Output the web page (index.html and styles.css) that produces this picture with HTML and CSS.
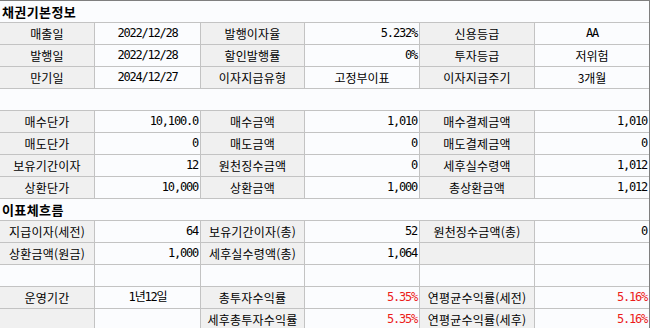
FILE: index.html
```html
<!DOCTYPE html>
<html lang="ko">
<head>
<meta charset="utf-8">
<title>채권기본정보</title>
<link rel="stylesheet" href="styles.css">
</head>
<body>
<div class="panel">
  <div class="title">채권기본정보</div>
  <div class="tbl">
    <div class="l">매출일</div><div class="c num">2022/12/28</div>
    <div class="l">발행이자율</div><div class="v num">5.232%</div>
    <div class="l">신용등급</div><div class="c num">AA</div>

    <div class="l">발행일</div><div class="c num">2022/12/28</div>
    <div class="l">할인발행률</div><div class="v num">0%</div>
    <div class="l">투자등급</div><div class="c">저위험</div>

    <div class="l">만기일</div><div class="c num">2024/12/27</div>
    <div class="l">이자지급유형</div><div class="c">고정부이표</div>
    <div class="l">이자지급주기</div><div class="c">3개월</div>
  </div>
  <div class="spacer"></div>
  <div class="tbl">
    <div class="l">매수단가</div><div class="v num">10,100.0</div>
    <div class="l">매수금액</div><div class="v num">1,010</div>
    <div class="l">매수결제금액</div><div class="v num">1,010</div>

    <div class="l">매도단가</div><div class="v num">0</div>
    <div class="l">매도금액</div><div class="v num">0</div>
    <div class="l">매도결제금액</div><div class="v num">0</div>

    <div class="l">보유기간이자</div><div class="v num">12</div>
    <div class="l">원천징수금액</div><div class="v num">0</div>
    <div class="l">세후실수령액</div><div class="v num">1,012</div>

    <div class="l">상환단가</div><div class="v num">10,000</div>
    <div class="l">상환금액</div><div class="v num">1,000</div>
    <div class="l">총상환금액</div><div class="v num">1,012</div>
  </div>
  <div class="title">이표체흐름</div>
  <div class="tbl">
    <div class="l">지급이자(세전)</div><div class="v num">64</div>
    <div class="l">보유기간이자(총)</div><div class="v num">52</div>
    <div class="l">원천징수금액(총)</div><div class="v num">0</div>

    <div class="l">상환금액(원금)</div><div class="v num">1,000</div>
    <div class="l">세후실수령액(총)</div><div class="v num">1,064</div>
    <div class="l"></div><div class="v"></div>

    <div class="v"></div><div class="v"></div>
    <div class="v"></div><div class="v"></div>
    <div class="v"></div><div class="v"></div>

    <div class="l">운영기간</div><div class="c num">1년12일</div>
    <div class="l">총투자수익률</div><div class="v num red">5.35%</div>
    <div class="l">연평균수익률(세전)</div><div class="v num red">5.16%</div>

    <div class="l"></div><div class="v"></div>
    <div class="l">세후총투자수익률</div><div class="v num red">5.35%</div>
    <div class="l">연평균수익률(세후)</div><div class="v num red">5.16%</div>
  </div>
</div>
</body>
</html>
```

FILE: styles.css
```css
html, body {
  margin: 0;
  padding: 0;
  background: #ffffff;
}

body {
  font-family: "Noto Sans CJK KR", "Noto Sans", sans-serif;
  font-size: 12px;
  color: #000;
  overflow: hidden;
}

.panel {
  width: 649px;
  border-top: 1px solid #7f7f7f;
  border-right: 1px solid #7f7f7f;
  background: #fbfcfe;
  display: flex;
  flex-direction: column;
}

.title {
  height: 21px;
  line-height: 21px;
  padding-left: 2px;
  font-size: 13px;
  font-weight: bold;
  letter-spacing: 0.4px;
  white-space: nowrap;
}

.spacer {
  height: 21px;
}

.tbl {
  display: grid;
  grid-template-columns: 94px 105px 103px 114px 114px 114px;
  grid-auto-rows: 21px;
  gap: 1px;
  background: #c3c3c3;
  border-top: 1px solid #c3c3c3;
  border-bottom: 1px solid #c3c3c3;
}

.tbl > div {
  line-height: 21px;
  white-space: nowrap;
  overflow: hidden;
}

.l {
  background: #f0f0f0;
  text-align: center;
  letter-spacing: 0.2px;
}

.v {
  background: #fbfcfe;
  text-align: right;
  padding-right: 2px;
}

.c {
  background: #fbfcfe;
  text-align: center;
}

.num {
  font-family: "DejaVu Sans Mono", "Noto Sans CJK KR", monospace;
  font-size: 12px;
  letter-spacing: -1.2px;
}

.red {
  color: #ec1c1c;
}
```
